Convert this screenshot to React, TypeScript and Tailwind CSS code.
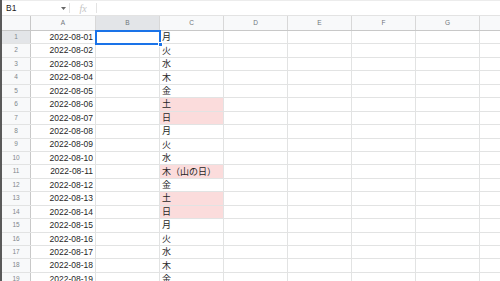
import React from "react";

const days = ["月", "火", "水", "木", "金", "土", "日"];
const rows = Array.from({ length: 19 }, (_, i) => {
  const d = i + 1;
  const date = `2022-08-${String(d).padStart(2, "0")}`;
  let w = days[i % 7];
  if (d === 11) w = "木（山の日）";
  const pink = [6, 7, 11, 13, 14].includes(d);
  return { n: d, date, w, pink };
});

const cols = ["A", "B", "C", "D", "E", "F", "G", ""];
const font = { fontFamily: '"Liberation Sans", Arial, "Noto Sans CJK JP", sans-serif' };

export default function App() {
  return (
    <div className="w-[500px] h-[281px] overflow-hidden bg-white relative border-l-2 border-[#5a5a5a]" style={font}>
      {/* formula bar */}
      <div className="h-[16px] flex items-stretch border-b border-t border-[#e3e3e3] border-t-[#ececec]">
        <div className="w-[67px] flex items-center justify-between pl-[4px] pr-[3px] text-[8.5px] text-[#222]">
          <span>B1</span>
          <svg width="5" height="3" viewBox="0 0 5 3"><path d="M0 0h5L2.5 3z" fill="#666" /></svg>
        </div>
        <div className="w-px bg-[#e3e3e3] my-[2px]" />
        <div className="w-[26px] flex items-center justify-center text-[10px] italic text-[#c4c4c4]" style={{ fontFamily: '"Liberation Serif", serif' }}>
          fx
        </div>
        <div className="w-px bg-[#e3e3e3] my-[2px]" />
        <div className="flex-1" />
      </div>
      {/* header */}
      <div className="h-[15px] flex bg-[#f8f9fa] border-b border-[#c8c8c8]">
        <div className="w-[29px] shrink-0 border-r border-[#c8c8c8]" />
        {cols.map((c, i) => (
          <div
            key={i}
            className={`${i === 0 ? "w-[65px]" : "w-[64px]"} shrink-0 border-r border-[#d8d8d8] flex items-center justify-center text-[6.5px] text-[#70757a] ${c === "B" ? "bg-[#e3e5e8]" : ""}`}
          >
            {c}
          </div>
        ))}
      </div>
      {/* rows */}
      {rows.map((r) => (
        <div key={r.n} className="h-[13.44px] flex border-b border-[#e2e3e3] leading-none">
          <div
            className={`w-[29px] shrink-0 border-r border-[#c8c8c8] flex items-center justify-center text-[6.5px] text-[#80868b] ${r.n === 1 ? "bg-[#e3e5e8]" : "bg-[#f8f9fa]"}`}
          >
            {r.n}
          </div>
          <div className="w-[65px] shrink-0 border-r border-[#e2e3e3] flex items-center justify-end pr-[2px] text-[8.5px] text-[#1f1f1f]">
            {r.date}
          </div>
          <div className="w-[64px] shrink-0 border-r border-[#e2e3e3]" />
          <div
            className={`w-[64px] shrink-0 border-r border-[#e2e3e3] flex items-center pl-[2px] pb-[1px] text-[9px] text-[#1f1f1f] ${r.pink ? "bg-[#fbdcdc]" : ""}`}
          >
            <span className="leading-[9px] block" style={{ fontFamily: '"Noto Sans CJK JP", sans-serif' }}>{r.w}</span>
          </div>
          {[0, 1, 2, 3, 4].map((k) => (
            <div key={k} className="w-[64px] shrink-0 border-r border-[#e2e3e3]" />
          ))}
        </div>
      ))}
      {/* selection */}
      <div className="absolute left-[93px] top-[30px] w-[66px] h-[15px] border-2 border-[#1a73e8]" />
      <div className="absolute left-[156px] top-[42px] w-[5px] h-[5px] bg-[#1a73e8] border border-white" />
    </div>
  );
}
